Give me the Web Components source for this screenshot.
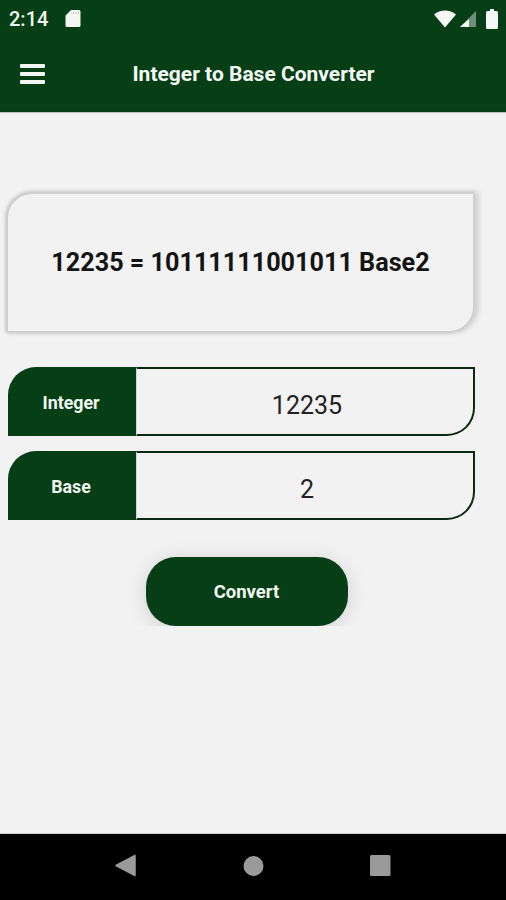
<!DOCTYPE html>
<html>
<head>
<meta charset="utf-8">
<title>Integer to Base Converter</title>
<style>
  html, body { margin: 0; height: 100%; }
  body { font-family: Roboto, "Liberation Sans", sans-serif; background: #f2f2f2; }
  #app { display: flex; flex-direction: column; width: 506px; height: 900px; overflow: hidden; }
</style>
</head>
<body>
<div id="app">
  <status-bar></status-bar>
  <app-bar>Integer to Base Converter</app-bar>
  <main-area>
    <result-card>12235 = 10111111001011 Base2</result-card>
    <input-row label="Integer" value="12235"></input-row>
    <input-row label="Base" value="2"></input-row>
    <convert-button>Convert</convert-button>
  </main-area>
  <nav-bar></nav-bar>
</div>

<script>
class StatusBar extends HTMLElement {
  constructor() {
    super();
    this.attachShadow({ mode: "open" });
    this.shadowRoot.innerHTML = `
<style>
  :host { display: flex; align-items: center; height: 37px; padding: 0 8px 0 9px; background: #063f15; color: #f1f5f1; font-size: 20px; font-weight: 500; flex: none; }
  .time { margin-right: 17px; }
  .right { margin-left: auto; display: flex; align-items: center; gap: 9px; }
  svg { display: block; }
</style>
<span class="time">2:14</span>
<svg width="16" height="19" viewBox="0 0 16 19"><path fill="#f4f6f2" d="M6 1h8a1.500 1.500 0 0 1 1.500 1.500v14a1.500 1.500 0 0 1-1.500 1.500H2a1.500 1.500 0 0 1-1.500-1.500V6.500z"/><path stroke="#7d957f" d="M8 4h1M10.500 4h1M13 4h1"/></svg>
<div class="right">
  <svg style="margin-right:-6px" width="22" height="18" viewBox="0 0 22 18"><path fill="#f6f8f5" d="M0 4.500C3 1.800 7 .5 11 .5s8 1.300 11 4L11 17.500z"/></svg>
  <svg width="18" height="16" viewBox="0 0 18 16"><path fill="#6f9076" d="M17 0v16H1z"/><path fill="#f6f8f5" d="M10 8v8H1z"/></svg>
  <svg width="12" height="20" viewBox="0 0 12 20"><path fill="#f6f8f5" d="M4 0h4v2h2.500A1.500 1.500 0 0 1 12 3.500v15a1.500 1.500 0 0 1-1.500 1.500h-9A1.500 1.500 0 0 1 0 18.500v-15A1.500 1.500 0 0 1 1.500 2H4z"/></svg>
</div>`;
  }
}

class AppBar extends HTMLElement {
  constructor() {
    super();
    this.attachShadow({ mode: "open" });
    this.shadowRoot.innerHTML = `
<style>
  :host { display: flex; align-items: center; position: relative; height: 75px; padding: 0 0 0 20px; box-sizing: border-box; background: #063f15; border-bottom: 1px solid #0a3a15; color: #f5f7f4; box-shadow: 0 1px 1px #bdbdbd; flex: none; }
  button { all: unset; display: flex; flex-direction: column; gap: 4px; width: 25px; }
  button i { display: block; height: 4px; background: #f3f5f2; border-radius: 1px; }
  h1 { margin: 0; width: 417px; text-align: center; font-size: 21px; font-weight: 700; line-height: 1; }
</style>
<button aria-label="menu"><i></i><i></i><i></i></button>
<h1><slot></slot></h1>`;
  }
}

class MainArea extends HTMLElement {
  constructor() {
    super();
    this.attachShadow({ mode: "open" });
    this.shadowRoot.innerHTML = `
<style>
  :host { display: flex; flex-direction: column; flex: 1; min-height: 0; padding: 82px 31px 0 8px; gap: 15px; background: #f2f2f2; }
</style>
<slot></slot>`;
  }
}

class ResultCard extends HTMLElement {
  constructor() {
    super();
    this.attachShadow({ mode: "open" });
    this.shadowRoot.innerHTML = `
<style>
  :host { display: flex; align-items: center; justify-content: center; height: 137px; margin: 0 0 21px 0; width: 465px; box-sizing: border-box; background: #f2f2f2; border-radius: 24px 0 24px 0; box-shadow: -1px -1px 3px 2px #cdcdcd, 4px 0 5px 2px #d2d2d2, 0 1px 3px 1px #c8c8c8; color: #141414; font-size: 25.200px; font-weight: 700; }
</style>
<slot></slot>`;
  }
}

class InputRow extends HTMLElement {
  constructor() {
    super();
    this.attachShadow({ mode: "open" });
    this.shadowRoot.innerHTML = `
<style>
  :host { display: flex; height: 69px; width: 467px; box-sizing: border-box; flex: none; }
  .label { display: flex; align-items: center; justify-content: center; width: 128px; padding: 1px 2px 0 0; box-sizing: border-box; flex: none; background: #063f15; color: #f2f5f1; font-size: 17.800px; font-weight: 700; border-radius: 28px 0 0 0; }
  .value { flex: 1; display: flex; align-items: center; justify-content: center; box-sizing: border-box; border: 2px solid #0b2a13; border-left: 1px solid #cfd8cf; border-radius: 0 0 28px 0; font-size: 25px; color: #222; padding: 7px 0 0 4px; }
</style>
<div class="label"></div>
<div class="value"></div>`;
    this.shadowRoot.querySelector(".label").textContent = this.getAttribute("label");
    this.shadowRoot.querySelector(".value").textContent = this.getAttribute("value");
  }
}

class ConvertButton extends HTMLElement {
  constructor() {
    super();
    this.attachShadow({ mode: "open" });
    this.shadowRoot.innerHTML = `
<style>
  /* la sombra se corta abajo, igual que en la captura */
  :host { display: flex; justify-content: center; overflow: hidden; width: 457px; padding: 21px 0 0 10px; height: 69px; box-sizing: content-box; margin-top: 1px; flex: none; }
  button { all: unset; display: flex; align-items: center; justify-content: center; width: 202px; height: 69px; background: #063f15; color: #f5f7f4; border-radius: 30px; font-size: 18.500px; font-weight: 700; box-sizing: border-box; box-shadow: 0 3px 20px rgba(0,0,0,.14); }
</style>
<button><slot></slot></button>`;
  }
}

class NavBar extends HTMLElement {
  constructor() {
    super();
    this.attachShadow({ mode: "open" });
    this.shadowRoot.innerHTML = `
<style>
  :host { display: flex; height: 67px; box-sizing: border-box; background: #000; border-top: 1px solid #c9c9c9; flex: none; position: relative; }
  svg { position: absolute; top: 0; left: 0; }
</style>
<svg width="506" height="66" viewBox="0 0 506 66">
  <path fill="#9a9a9a" stroke="#9a9a9a" stroke-width="1.500" stroke-linejoin="round" d="M135 21.500v20L116 31.500z"/>
  <circle cx="253.500" cy="32" r="10" fill="#9a9a9a"/>
  <rect x="370" y="21" width="20.500" height="21" rx="1.500" fill="#9a9a9a"/>
</svg>`;
  }
}

customElements.define("status-bar", StatusBar);
customElements.define("app-bar", AppBar);
customElements.define("main-area", MainArea);
customElements.define("result-card", ResultCard);
customElements.define("input-row", InputRow);
customElements.define("convert-button", ConvertButton);
customElements.define("nav-bar", NavBar);
</script>
</body>
</html>
